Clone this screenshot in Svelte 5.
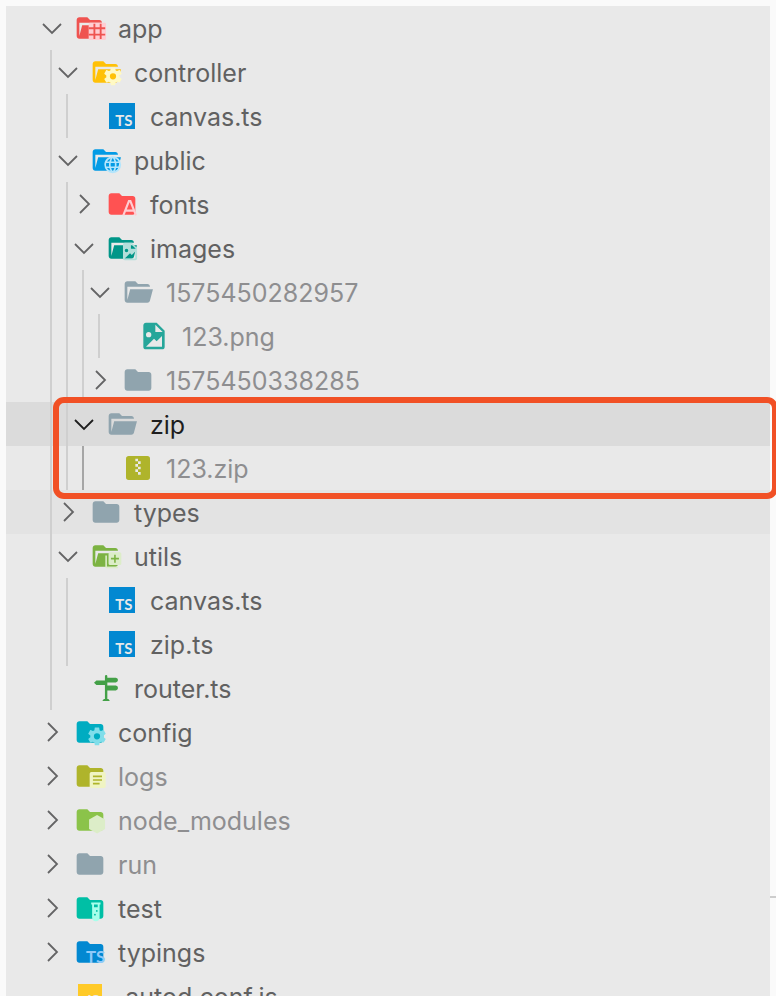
<script>
	const folder = 'M10 4H4c-1.11 0-2 .89-2 2v12c0 1.1.9 2 2 2h16c1.1 0 2-.9 2-2V8c0-1.11-.9-2-2-2h-8l-2-2z';
	const folderOpen = 'M19 20H4c-1.11 0-2-.9-2-2V6c0-1.11.89-2 2-2h6l2 2h7c1.1 0 2 .9 2 2H4v10l2.14-8h17.07l-2.28 8.5c-.23.87-1.01 1.5-1.93 1.5z';
	const gear = 'M12 15.5A3.5 3.5 0 0 1 8.5 12 3.5 3.5 0 0 1 12 8.5a3.5 3.5 0 0 1 3.5 3.5 3.5 3.5 0 0 1-3.5 3.5m7.43-2.53c.04-.32.07-.64.07-.97 0-.33-.03-.66-.07-1l2.11-1.63c.19-.15.24-.42.12-.64l-2-3.46c-.12-.22-.39-.31-.61-.22l-2.49 1c-.52-.39-1.06-.73-1.69-.98l-.37-2.65A.506.506 0 0 0 14 2h-4c-.25 0-.46.18-.5.42l-.37 2.65c-.63.25-1.17.59-1.69.98l-2.49-1c-.22-.09-.49 0-.61.22l-2 3.46c-.13.22-.07.49.12.64L4.57 11c-.04.34-.07.67-.07 1 0 .33.03.65.07.97l-2.11 1.66c-.19.15-.25.42-.12.64l2 3.46c.12.22.39.3.61.22l2.49-1.01c.52.4 1.06.74 1.69.99l.37 2.65c.04.24.25.42.5.42h4c.25 0 .46-.18.5-.42l.37-2.65c.63-.26 1.17-.59 1.69-.99l2.49 1.01c.22.08.49 0 .61-.22l2-3.46c.12-.22.07-.49-.12-.64l-2.11-1.66z';
	const web = 'M16.36 14c.08-.66.14-1.32.14-2 0-.68-.06-1.34-.14-2h3.38c.16.64.26 1.31.26 2s-.1 1.36-.26 2m-5.15 5.56c.6-1.11 1.06-2.31 1.38-3.56h2.95a8.03 8.03 0 0 1-4.33 3.56M14.34 14H9.66c-.1-.66-.16-1.32-.16-2 0-.68.06-1.35.16-2h4.68c.09.65.16 1.32.16 2 0 .68-.07 1.34-.16 2M12 19.96c-.83-1.2-1.5-2.53-1.91-3.96h3.82c-.41 1.43-1.08 2.76-1.91 3.96M8 8H5.08A7.923 7.923 0 0 1 9.4 4.44C8.8 5.55 8.35 6.75 8 8m-2.92 8H8c.35 1.25.8 2.45 1.4 3.56A8.008 8.008 0 0 1 5.08 16m-.82-2C4.1 13.36 4 12.69 4 12s.1-1.36.26-2h3.38c-.08.66-.14 1.32-.14 2 0 .68.06 1.34.14 2M12 4.03c.83 1.2 1.5 2.54 1.91 3.97h-3.82c.41-1.43 1.08-2.77 1.91-3.97M18.92 8h-2.95a15.65 15.65 0 0 0-1.38-3.56c1.84.63 3.37 1.9 4.33 3.56M12 2C6.47 2 2 6.5 2 12a10 10 0 0 0 10 10 10 10 0 0 0 10-10A10 10 0 0 0 12 2z';
	const image = 'M13 9h5.5L13 3.5V9M6 2h8l6 6v12a2 2 0 0 1-2 2H6a2 2 0 0 1-2-2V4c0-1.11.89-2 2-2m0 18h12v-8l-4 4-2-2-6 6M8 9a2 2 0 0 0-2 2 2 2 0 0 0 2 2 2 2 0 0 0 2-2 2 2 0 0 0-2-2z';
	const plus = 'M19 11h-4v4h-2v-4H9V9h4V5h2v4h4m1-7H8a2 2 0 0 0-2 2v12a2 2 0 0 0 2 2h12a2 2 0 0 0 2-2V4a2 2 0 0 0-2-2M4 6H2v14a2 2 0 0 0 2 2h14v-2H4V6z';
	const tube = 'M7 2v2h1v14a4 4 0 0 0 4 4 4 4 0 0 0 4-4V4h1V2H7m4 14c-.6 0-1-.4-1-1s.4-1 1-1 1 .4 1 1-.4 1-1 1m2-4c-.6 0-1-.4-1-1s.4-1 1-1 1 .4 1 1-.4 1-1 1m1-5h-4V4h4v3z';
	const zip = 'M14 17h-2v-2h-2v-2h2v2h2m0-6h-2v2h2v2h-2v-2h-2V9h2V7h-2V5h2v2h2m5-4H5c-1.11 0-2 .89-2 2v14a2 2 0 0 0 2 2h14a2 2 0 0 0 2-2V5a2 2 0 0 0-2-2z';

	const colors = {
		app: '#ef5350',
		controller: '#ffc107',
		public: '#039be5',
		fonts: '#ff5252',
		images: '#009688',
		utils: '#7cb342',
		config: '#00acc1',
		logs: '#afb42b',
		node: '#8bc34a',
		test: '#00bfa5',
		typings: '#0288d1',
		plain: '#90a4ae'
	};

	let tree = $state([
		{
			name: 'app', icon: 'app', open: true, children: [
				{
					name: 'controller', icon: 'controller', open: true, children: [
						{ name: 'canvas.ts', icon: 'ts' }
					]
				},
				{
					name: 'public', icon: 'public', open: true, children: [
						{ name: 'fonts', icon: 'fonts', open: false, children: [] },
						{
							name: 'images', icon: 'images', open: true, children: [
								{
									name: '1575450282957', icon: 'plain', ignored: true, open: true, children: [
										{ name: '123.png', icon: 'png', ignored: true }
									]
								},
								{ name: '1575450338285', icon: 'plain', ignored: true, open: false, children: [] }
							]
						},
						{
							name: 'zip', icon: 'plain', selected: true, marked: true, open: true, children: [
								{ name: '123.zip', icon: 'zip', ignored: true }
							]
						}
					]
				},
				{ name: 'types', icon: 'plain', hovered: true, open: false, children: [] },
				{
					name: 'utils', icon: 'utils', open: true, children: [
						{ name: 'canvas.ts', icon: 'ts' },
						{ name: 'zip.ts', icon: 'ts' }
					]
				},
				{ name: 'router.ts', icon: 'router' }
			]
		},
		{ name: 'config', icon: 'config', open: false, children: [] },
		{ name: 'logs', icon: 'logs', ignored: true, open: false, children: [] },
		{ name: 'node_modules', icon: 'node', ignored: true, open: false, children: [] },
		{ name: 'run', icon: 'plain', ignored: true, open: false, children: [] },
		{ name: 'test', icon: 'test', open: false, children: [] },
		{ name: 'typings', icon: 'typings', open: false, children: [] },
		{ name: '.autod.conf.js', icon: 'js' }
	]);

	const toggle = (item) => {
		if (item.children) item.open = !item.open;
	};
</script>

{#snippet icon(item)}
	<svg class="icon" viewBox="0 0 24 24" aria-hidden="true">
		{#if item.children}
			<path d={item.open ? folderOpen : folder} fill={colors[item.icon]} />
		{/if}
		{#if item.icon === 'app'}
			<rect x="11" y="8" width="13" height="13" rx="1" fill="#ffcdd2" />
			<path d="M11 12.2h12.4M11 17h12.4M15.3 8.8v11.4M20 8.8v11.4" stroke="#ef5350" stroke-width="1.4" />
		{:else if item.icon === 'controller'}
			<path d={gear} transform="translate(9.2 7.2) scale(.67)" fill="#fff9c4" />
		{:else if item.icon === 'config'}
			<path d={gear} transform="translate(9.2 7.2) scale(.67)" fill="#80deea" />
		{:else if item.icon === 'public'}
			<path d={web} transform="translate(9.5 8) scale(.63)" fill="#b3e5fc" />
		{:else if item.icon === 'fonts'}
			<path d="M13 20.5 17.2 9.8h1.1l4.2 10.7M14.6 17h6.4" fill="none" stroke="#ffcdd2" stroke-width="1.6" />
		{:else if item.icon === 'images'}
			<path d={image} transform="translate(10.1 6.7) scale(.66)" fill="#b2dfdb" />
		{:else if item.icon === 'utils'}
			<path d={plus} transform="translate(10.3 8) scale(.6)" fill="#dcedc8" />
		{:else if item.icon === 'logs'}
			<rect x="11.75" y="9" width="12" height="12" rx="1.3" fill="#f0f4c3" />
			<path d="M14.2 12.3h6.8M14.2 15h6.8M14.2 17.7h5" stroke="#afb42b" stroke-width="1.2" />
		{:else if item.icon === 'node'}
			<path d="m17.3 8.2 6 3.4v7.1l-6 3.5-6-3.5v-7.1z" fill="#dcedc8" />
		{:else if item.icon === 'test'}
			<path d={tube} transform="translate(8 6.5) scale(.7)" fill="#a7ffeb" />
		{:else if item.icon === 'typings'}
			<text x="9" y="20.6" font-size="12.6" fill="#90caf9">TS</text>
		{:else if item.icon === 'ts'}
			<path d="M2.25 2.25h19.5v19.5H2.25z" fill="#0288d1" />
			<text x="7" y="19.8" font-size="11.2" fill="#e9e9e9">TS</text>
		{:else if item.icon === 'js'}
			<path d="M3 3h18v18H3z" fill="#ffca28" />
			<text x="8.4" y="19.5" font-size="11.2" fill="#e9e9e9">JS</text>
		{:else if item.icon === 'png'}
			<path d={image} fill="#26a69a" />
		{:else if item.icon === 'zip'}
			<path d={zip} fill="#afb42b" />
		{:else if item.icon === 'router'}
			<path
				d="M11.2 3.1a.9.9 0 0 1 1.8 0v1.2h6.4q1.6.4 1.6 1.7t-1.6 1.9H13v2.3h6.4q1.6.4 1.6 1.8t-1.6 1.8H13v6.5h.8l1.1 1.5H9.2l1.2-1.5h.8V9.8H4.8L3 8.1l1.8-1.7h6.4z"
				fill="#43a047"
			/>
		{/if}
	</svg>
{/snippet}

{#snippet branch(items, depth, active)}
	<ul class="list">
		{#each items as item}
			<li class="item" class:marked={item.marked}>
				<button
					class="row"
					class:ignored={item.ignored}
					class:selected={item.selected}
					class:hovered={item.hovered}
					aria-expanded={item.children ? item.open : undefined}
					onclick={() => toggle(item)}
				>
					{#each { length: depth } as _, level}
						<span class="guide" class:active={active && level === depth - 1}></span>
					{/each}
					<svg class="twistie" viewBox="0 0 32 32" aria-hidden="true">
						{#if item.children}
							<path d={item.open ? 'm7 12 9 9 9-9' : 'm12 7 9 9-9 9'} />
						{/if}
					</svg>
					{@render icon(item)}
					<span class="name">{item.name}</span>
				</button>
				{#if item.open && item.children.length}
					{@render branch(item.children, depth + 1, item.selected)}
				{/if}
			</li>
		{/each}
	</ul>
{/snippet}

<main class="window">
	<nav class="explorer" aria-label="Files">
		{@render branch(tree, 0, false)}
	</nav>
	<div class="editor"></div>
</main>

<style>
	:global(body) {
		margin: 0;
		background: #fafafa;
	}

	.window {
		display: flex;
		box-sizing: border-box;
		height: 100vh;
		padding: 6px 0 0 6px;
		overflow: hidden;
		font-family: Inter, Roboto, sans-serif;
	}

	.explorer {
		flex: 1;
		min-width: 0;
		background: #e9e9e9;
	}

	.editor {
		flex: none;
		width: 6px;
		height: 890px;
		border-bottom: 2px solid #cdcdcd;
	}

	.list {
		margin: 0;
		padding: 0;
		list-style: none;
	}

	.row {
		display: flex;
		align-items: center;
		width: 100%;
		height: 44px;
		padding: 0 0 0 30px;
		border: 0;
		background: none;
		color: #616161;
		font: inherit;
		font-size: 25px;
		line-height: 44px;
		text-align: left;
		white-space: nowrap;
	}

	.name {
		padding-top: 2px;
	}

	.ignored {
		color: #8e8e90;
	}

	.hovered {
		background: #e3e3e3;
	}

	.selected {
		background: #dbdbdb;
		color: #1e1e1e;
	}

	.guide {
		flex: none;
		box-sizing: border-box;
		width: 16px;
		height: 44px;
		border-right: 2px solid #cfcfcf;
	}

	.guide.active {
		border-color: #a6a6a6;
	}

	.twistie {
		flex: none;
		width: 32px;
		height: 32px;
		margin-right: 6px;
		fill: none;
		stroke: #646465;
		stroke-width: 1.8;
	}

	.selected .twistie {
		stroke: #1e1e1e;
	}

	.icon {
		flex: none;
		width: 32px;
		height: 32px;
		margin-right: 12px;
		font-family: Lato, sans-serif;
		font-weight: 700;
	}

	/* red frame around the freshly created folder */
	.marked {
		position: relative;
	}

	.marked::after {
		content: '';
		position: absolute;
		inset: -5px -8px -9px 47px;
		z-index: 1;
		border: 6px solid #f15025;
		border-radius: 11px;
		pointer-events: none;
	}
</style>
